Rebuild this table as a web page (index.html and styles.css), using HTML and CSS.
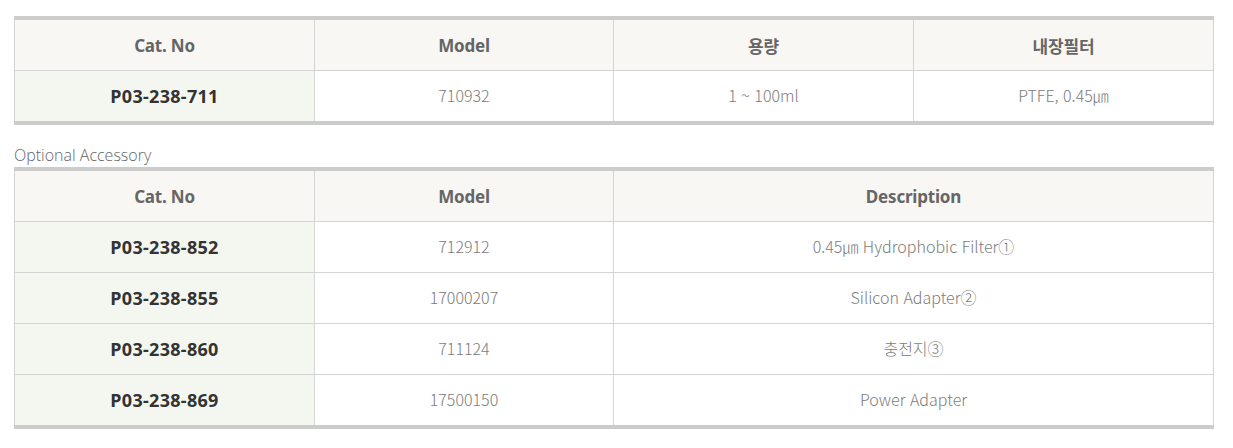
FILE: index.html
```html
<!DOCTYPE html>
<html lang="ko">
<head>
<meta charset="utf-8">
<title>Spec</title>
<link rel="stylesheet" href="styles.css">
</head>
<body>
<div class="page">
  <table class="spec">
    <colgroup><col class="c300"><col class="c299"><col class="c300"><col class="c300"></colgroup>
    <thead>
      <tr><th>Cat. No</th><th>Model</th><th>용량</th><th>내장필터</th></tr>
    </thead>
    <tbody>
      <tr><td class="cat">P03-238-711</td><td>710932</td><td>1 ~ 100ml</td><td>PTFE, 0.45㎛</td></tr>
    </tbody>
  </table>
  <div class="caption">Optional Accessory</div>
  <table class="spec">
    <colgroup><col class="c300"><col class="c299"><col class="c600"></colgroup>
    <thead>
      <tr><th>Cat. No</th><th>Model</th><th>Description</th></tr>
    </thead>
    <tbody>
      <tr><td class="cat">P03-238-852</td><td>712912</td><td>0.45㎛ Hydrophobic Filter①</td></tr>
      <tr><td class="cat">P03-238-855</td><td>17000207</td><td>Silicon Adapter②</td></tr>
      <tr><td class="cat">P03-238-860</td><td>711124</td><td>충전지③</td></tr>
      <tr><td class="cat">P03-238-869</td><td>17500150</td><td>Power Adapter</td></tr>
    </tbody>
  </table>
</div>
</body>
</html>
```

FILE: styles.css
```css
html, body {
  margin: 0;
  padding: 0;
  background: #ffffff;
}
.page {
  padding: 16px 0 0 14px;
}
.spec {
  width: 1197px;
  border-collapse: collapse;
  table-layout: fixed;
  border-top: 4px solid #cccccc;
  border-bottom: 4px solid #cccccc;
  border-left: 1px solid #cccccc;
  border-right: 1px solid #cccccc;
}
.c300 { width: 300px; }
.c299 { width: 299px; }
.c600 { width: 600px; }
.spec th,
.spec td {
  height: 50px;
  padding: 0;
  text-align: center;
  vertical-align: middle;
  border: 1px solid #d4d4d4;
}
.spec th {
  background: #f9f7f3;
  color: #666666;
  font-family: "Noto Sans", "Noto Sans CJK KR", sans-serif;
  font-weight: 700;
  font-size: 17px;
  letter-spacing: -0.2px;
}
.spec td {
  height: 47px;
  background: #ffffff;
  color: #7c7c7c;
  font-family: "Noto Sans CJK KR", sans-serif;
  font-weight: 300;
  font-size: 16px;
  letter-spacing: 0;
  padding-bottom: 3px;
}
.spec td.cat {
  height: 50px;
  background: #f4f6f0;
  color: #333333;
  font-family: "Noto Sans", "Noto Sans CJK KR", sans-serif;
  font-weight: 700;
  font-size: 18px;
  letter-spacing: 0.3px;
  padding-bottom: 0;
}
.caption {
  padding-top: 18px;
  height: 24px;
  line-height: 24px;
  color: #666666;
  font-family: "Open Sans", "Noto Sans CJK KR", sans-serif;
  font-size: 16px;
  font-weight: 300;
}
```
